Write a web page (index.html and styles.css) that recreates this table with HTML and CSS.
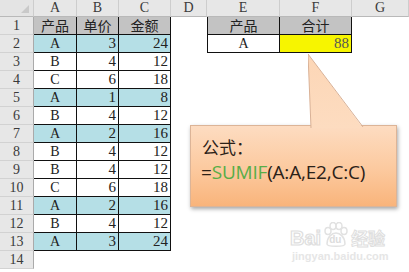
FILE: index.html
```html
<!DOCTYPE html>
<html lang="zh">
<head>
<meta charset="utf-8">
<link rel="stylesheet" href="styles.css">
</head>
<body>
<div class="page">
  <div class="sheet">
    <div class="ch corner"><svg class="tri" width="8" height="8" viewBox="0 0 8 8"><polygon points="8,0 8,8 0,8" fill="#c9c9c9"/></svg></div>
    <div class="ch">A</div><div class="ch">B</div><div class="ch">C</div><div class="ch">D</div><div class="ch">E</div><div class="ch">F</div><div class="ch">G</div>

    <div class="rn">1</div>
    <div class="c b hd colA">产品</div><div class="c b hd">单价</div><div class="c b hd">金额</div><div class="c"></div>
    <div class="c b hd colE">产品</div><div class="c b hd">合计</div><div class="c"></div>

    <div class="rn">2</div>
    <div class="c b cy colA ctr">A</div><div class="c b cy num">3</div><div class="c b cy num">24</div><div class="c"></div>
    <div class="c b colE ctr">A</div><div class="c b yel num">88</div><div class="c"></div>

    <div class="rn">3</div>
    <div class="c b colA ctr">B</div><div class="c b num">4</div><div class="c b num">12</div><div class="c"></div><div class="c"></div><div class="c"></div><div class="c"></div>

    <div class="rn">4</div>
    <div class="c b colA ctr">C</div><div class="c b num">6</div><div class="c b num">18</div><div class="c"></div><div class="c"></div><div class="c"></div><div class="c"></div>

    <div class="rn">5</div>
    <div class="c b cy colA ctr">A</div><div class="c b cy num">1</div><div class="c b cy num">8</div><div class="c"></div><div class="c"></div><div class="c"></div><div class="c"></div>

    <div class="rn">6</div>
    <div class="c b colA ctr">B</div><div class="c b num">4</div><div class="c b num">12</div><div class="c"></div><div class="c"></div><div class="c"></div><div class="c"></div>

    <div class="rn">7</div>
    <div class="c b cy colA ctr">A</div><div class="c b cy num">2</div><div class="c b cy num">16</div><div class="c"></div><div class="c"></div><div class="c"></div><div class="c"></div>

    <div class="rn">8</div>
    <div class="c b colA ctr">B</div><div class="c b num">4</div><div class="c b num">12</div><div class="c"></div><div class="c"></div><div class="c"></div><div class="c"></div>

    <div class="rn">9</div>
    <div class="c b colA ctr">B</div><div class="c b num">4</div><div class="c b num">12</div><div class="c"></div><div class="c"></div><div class="c"></div><div class="c"></div>

    <div class="rn">10</div>
    <div class="c b colA ctr">C</div><div class="c b num">6</div><div class="c b num">18</div><div class="c"></div><div class="c"></div><div class="c"></div><div class="c"></div>

    <div class="rn">11</div>
    <div class="c b cy colA ctr">A</div><div class="c b cy num">2</div><div class="c b cy num">16</div><div class="c"></div><div class="c"></div><div class="c"></div><div class="c"></div>

    <div class="rn">12</div>
    <div class="c b colA ctr">B</div><div class="c b num">4</div><div class="c b num">12</div><div class="c"></div><div class="c"></div><div class="c"></div><div class="c"></div>

    <div class="rn">13</div>
    <div class="c b cy colA ctr">A</div><div class="c b cy num">3</div><div class="c b cy num">24</div><div class="c"></div><div class="c"></div><div class="c"></div><div class="c"></div>

    <div class="rn">14</div>
    <div class="c"></div><div class="c"></div><div class="c"></div><div class="c"></div><div class="c"></div><div class="c"></div><div class="c"></div>
  </div>

  <div class="callout">
    <svg class="pointer" width="80" height="76" viewBox="0 0 80 76">
      <defs>
        <linearGradient id="pg" x1="0" y1="0" x2="0" y2="1">
          <stop offset="0" stop-color="#fcd6b6"/>
          <stop offset="1" stop-color="#fddcc0"/>
        </linearGradient>
      </defs>
      <polygon points="0,1 3,75 55,75" fill="url(#pg)"/>
      <polyline points="3,75 0,1 55,74" fill="none" stroke="#d9b196" stroke-width="1"/>
    </svg>
    <div class="label">公式：</div>
    <div class="formula">=<span class="fn">SUMIF</span>(A:A,E2,C:C)</div>
  </div>

  <div class="watermark">
    <div class="wm-top">
      <span class="wm-bai">Bai</span>
      <span class="wm-paw">
        <svg width="28" height="26" viewBox="0 0 28 26">
          <ellipse cx="6" cy="9" rx="3" ry="3.5" fill="none" stroke="#e2e2e2" stroke-width="1.5"/>
          <ellipse cx="11" cy="4" rx="3" ry="3.5" fill="none" stroke="#e2e2e2" stroke-width="1.5"/>
          <ellipse cx="17" cy="4" rx="3" ry="3.5" fill="none" stroke="#e2e2e2" stroke-width="1.5"/>
          <ellipse cx="22" cy="9" rx="3" ry="3.5" fill="none" stroke="#e2e2e2" stroke-width="1.5"/>
          <path d="M5,22 C5,15 10,11 14,11 C18,11 23,15 23,22 C23,25 5,25 5,22 Z" fill="none" stroke="#e2e2e2" stroke-width="1.5"/>
        </svg>
        <span class="wm-du">du</span>
      </span>
      <span class="wm-jy">经验</span>
    </div>
    <div class="wm-url">jingyan.baidu.com</div>
  </div>
</div>
</body>
</html>
```
FILE: styles.css
```css
html, body {
  margin: 0;
  padding: 0;
  background: #ffffff;
}
.page {
  position: relative;
  width: 409px;
  height: 272px;
  overflow: hidden;
  background: #ffffff;
}
.sheet {
  display: grid;
  grid-template-columns: 34px 43px 42px 52px 36px 73px 72px 1fr;
  grid-template-rows: 17px repeat(15, 18px);
  font-family: "Liberation Serif", "Noto Sans CJK SC", serif;
  font-size: 14px;
  color: #222;
}
.sheet > div {
  box-sizing: border-box;
  line-height: 17px;
  white-space: nowrap;
}
.ch {
  background: #e7e7e7;
  border-right: 1px solid #cdcdcd;
  border-bottom: 1px solid #b9b9b9;
  text-align: center;
  color: #3a3a3a;
  font-size: 14px;
  line-height: 16px !important;
}
.corner {
  position: relative;
  background: #e4e4e4;
}
.tri {
  position: absolute;
  right: 4px;
  bottom: 3px;
}
.rn {
  background: #e7e7e7;
  border-right: 1px solid #aaaaaa;
  border-bottom: 1px solid #d2d2d2;
  text-align: center;
  color: #3a3a3a;
}
.c {
  background: #ffffff;
}
.b {
  border-right: 1px solid #111;
  border-bottom: 1px solid #111;
}
.colE {
  border-left: 1px solid #111;
}
.hd {
  background: #c3c3c3;
  text-align: center;
  font-family: "Noto Sans CJK SC", sans-serif;
  font-size: 14px;
  line-height: 17px !important;
  color: #222;
}
.cy {
  background: #b5dfe6;
}
.yel {
  background: #f7f500;
  color: #555;
}
.ctr {
  text-align: center;
}
.num {
  text-align: right;
  padding-right: 2px;
  font-size: 15px;
}

.callout {
  position: absolute;
  left: 190px;
  top: 125px;
  width: 207px;
  height: 82px;
  box-sizing: border-box;
  border: 1px solid #dcb497;
  background: linear-gradient(to bottom, #fddcc1 0%, #fcc99e 55%, #f9b47b 100%);
  box-shadow: 1px 2px 4px rgba(0, 0, 0, 0.35);
  padding: 9px 0 0 11px;
  color: #2b2118;
}
.pointer {
  position: absolute;
  left: 117px;
  top: -73px;
}
.label {
  font-family: "Noto Sans CJK SC", sans-serif;
  font-size: 17px;
  line-height: 24px;
}
.formula {
  font-family: "Open Sans", "Noto Sans", sans-serif;
  font-size: 19px;
  line-height: 26px;
  margin-left: -1px;
  letter-spacing: -0.2px;
}
.fn {
  color: #58ad48;
}

.watermark {
  position: absolute;
  left: 290px;
  top: 222px;
  color: #e3e3e3;
  font-family: "Liberation Sans", sans-serif;
}
.wm-top {
  display: flex;
  align-items: flex-end;
  gap: 1px;
  height: 26px;
}
.wm-bai {
  font-size: 20px;
  font-weight: bold;
  line-height: 20px;
  color: #ffffff;
  -webkit-text-stroke: 1.2px #dedede;
}
.wm-paw {
  position: relative;
  width: 28px;
  height: 26px;
}
.wm-paw svg {
  position: absolute;
  left: 0;
  top: 0;
}
.wm-du {
  position: absolute;
  left: 7px;
  top: 12px;
  font-size: 10px;
  font-weight: bold;
  color: #dcdcdc;
}
.wm-jy {
  font-family: "Noto Sans CJK SC", sans-serif;
  font-size: 17px;
  line-height: 20px;
  font-weight: bold;
  color: #ffffff;
  -webkit-text-stroke: 1px #dedede;
}
.wm-url {
  font-size: 11px;
  font-weight: bold;
  color: #e6e6e6;
  margin-top: 2px;
  margin-left: 2px;
}
```
